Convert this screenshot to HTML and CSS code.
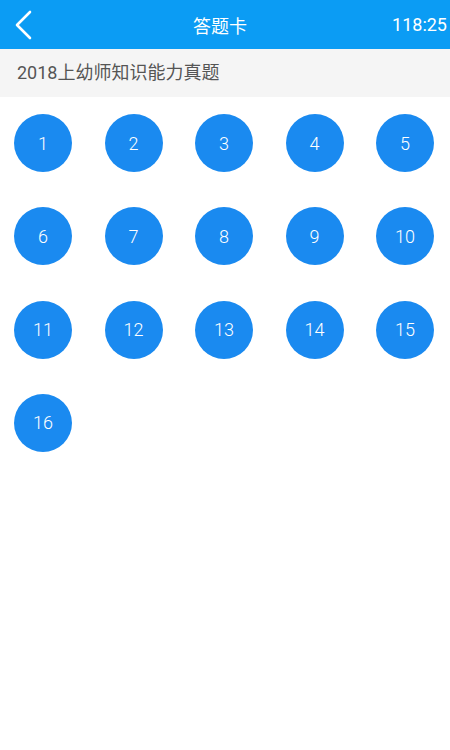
FILE: index.html
```html
<!DOCTYPE html>
<html lang="zh">
  <head>
    <meta charset="UTF-8" />
    <meta name="viewport" content="width=device-width, initial-scale=1.0" />
    <title>答题卡</title>
    <link rel="stylesheet" href="styles.css">
  </head>
  <body>
    <!-- 顶部导航 -->
    <div class="topbar">
      <span class="back">
        <svg width="20" height="30" viewBox="0 0 20 30">
          <path d="M17 2 L4 15 L17 28" fill="none" stroke="#fff" stroke-width="2.6" stroke-linecap="round" stroke-linejoin="round" />
        </svg>
      </span>
      <span class="title">答题卡</span>
      <span class="timer">118:25</span>
    </div>

    <!-- 试卷名称 -->
    <div class="paper-name">2018上幼师知识能力真题</div>

    <!-- 题号列表 -->
    <div class="card-grid">
      <div class="num">1</div>
      <div class="num">2</div>
      <div class="num">3</div>
      <div class="num">4</div>
      <div class="num">5</div>
      <div class="num">6</div>
      <div class="num">7</div>
      <div class="num">8</div>
      <div class="num">9</div>
      <div class="num">10</div>
      <div class="num">11</div>
      <div class="num">12</div>
      <div class="num">13</div>
      <div class="num">14</div>
      <div class="num">15</div>
      <div class="num">16</div>
    </div>
  </body>
</html>
```

FILE: styles.css
```css
/* 全体布局 */
body {
  margin: 0;
  height: 750px;
  background: #fff;
  font-family: 'Roboto', 'Noto Sans CJK SC', sans-serif;
  overflow: hidden;
}

/* 顶部导航 */
.topbar {
  height: 49px;
  background-color: #0b9cf4;
  color: #fff;
  display: flex;
  align-items: center;
  position: relative;
}

.back {
  display: flex;
  align-items: center;
  padding-left: 13px;
  width: 60px;
}

.title {
  position: absolute;
  left: 0;
  right: 10px;
  text-align: center;
  font-size: 18px;
  pointer-events: none;
}

.timer {
  margin-left: auto;
  padding-right: 3px;
  font-size: 18px;
}

/* 试卷名称 */
.paper-name {
  height: 48px;
  line-height: 48px;
  background: #f5f5f5;
  color: #555;
  font-size: 18px;
  padding-left: 17px;
}

/* 题号 */
.card-grid {
  display: flex;
  flex-wrap: wrap;
  column-gap: 32.5px;
  row-gap: 35.3px;
  padding: 17px 0 0 14px;
}

.num {
  width: 58px;
  height: 58px;
  border-radius: 50%;
  background-color: #1a8af0;
  color: #fff;
  font-size: 18px;
  font-weight: 300;
  display: flex;
  align-items: center;
  justify-content: center;
}
```
